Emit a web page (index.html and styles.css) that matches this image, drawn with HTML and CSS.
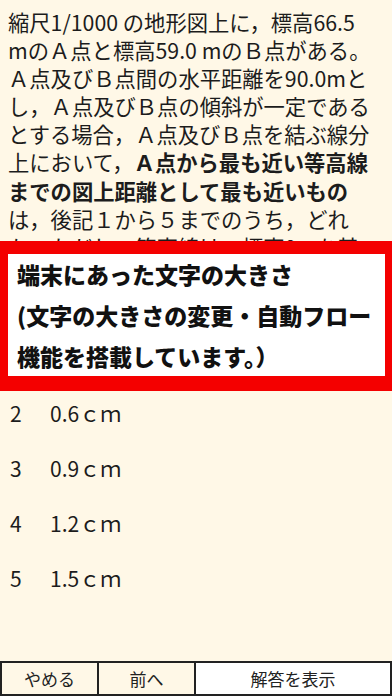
FILE: index.html
```html
<!DOCTYPE html>
<html lang="ja">
<head>
  <meta charset="UTF-8">
  <title>問題</title>
  <meta name="viewport" content="width=device-width, initial-scale=1.0">
  <link rel="stylesheet" href="styles.css">
</head>
<body>

  <!-- 問題文 -->
  <div class="page">
    <div class="question">
      縮尺1/1000 の地形図上に，標高66.5<br>
      mのＡ点と標高59.0 mのＢ点がある。<br>
      Ａ点及びＢ点間の水平距離を90.0mと<br>
      し，Ａ点及びＢ点の傾斜が一定である<br>
      とする場合，Ａ点及びＢ点を結ぶ線分<br>
      上において，<b>Ａ点から最も近い等高線</b><br>
      <b>までの図上距離として最も近いもの</b><br>
      は，後記１から５までのうち，どれ<br>
      か。ただし，等高線は，標高0mを基<br>
      準として1mごとに引かれている。
    </div>

    <!-- 選択肢 -->
    <div class="choices">
      <div class="choice"><span class="num">1</span>0.3ｃｍ</div>
      <div class="choice"><span class="num">2</span>0.6ｃｍ</div>
      <div class="choice"><span class="num">3</span>0.9ｃｍ</div>
      <div class="choice"><span class="num">4</span>1.2ｃｍ</div>
      <div class="choice"><span class="num">5</span>1.5ｃｍ</div>
    </div>

    <!-- お知らせ -->
    <div class="notice">
      <div class="notice-inner">
        端末にあった文字の大きさ<br>
        (文字の大きさの変更・自動フロー<br>
        機能を搭載しています。）
      </div>
    </div>
  </div>

  <!-- ボタン -->
  <footer>
    <button class="btn">やめる</button>
    <button class="btn">前へ</button>
    <button class="btn btn-answer">解答を表示</button>
  </footer>

</body>
</html>
```

FILE: styles.css
```css
    body {
      margin: 0;
      height: 100vh;
      display: flex;
      flex-direction: column;
      font-family: "Noto Sans CJK JP", "Noto Sans", sans-serif;
      background-color: #fff8e7;
      color: #1c1c1c;
    }

    /* 問題 */
    .page {
      position: relative;
      flex: 1;
      overflow: hidden;
    }

    .question {
      padding: 8px 0 0 8px;
      font-size: 21.3px;
      line-height: 28.1px;
      white-space: nowrap;
    }

    .question b {
      font-weight: bold;
    }

    .choices {
      margin-top: 46px;
    }

    .choice {
      height: 55px;
      line-height: 47px;
      padding-left: 10px;
      font-size: 21px;
    }

    .choice .num {
      display: inline-block;
      width: 40px;
    }

    /* 赤い枠 */
    .notice {
      position: absolute;
      top: 241px;
      left: 0;
      right: 0;
      height: 150px;
      box-sizing: border-box;
      padding: 13px 7px 15px 8px;
      background-color: #f40000;
    }

    .notice-inner {
      height: 100%;
      background-color: #fff;
      padding-left: 9px;
      font-size: 23px;
      font-weight: 900;
      line-height: 41px;
      color: #111;
      white-space: nowrap;
    }

    /* ボタン */
    footer {
      display: grid;
      grid-template-columns: 95px 95px 1fr;
      gap: 2px;
      padding: 2px;
      height: 35px;
      box-sizing: border-box;
      background-color: #222;
    }

    .btn {
      margin: 0;
      border: none;
      padding: 0;
      background-color: #fff8e7;
      font-family: inherit;
      font-size: 17px;
      color: #222;
    }

    .btn-answer {
      background-color: #fff;
    }
```
